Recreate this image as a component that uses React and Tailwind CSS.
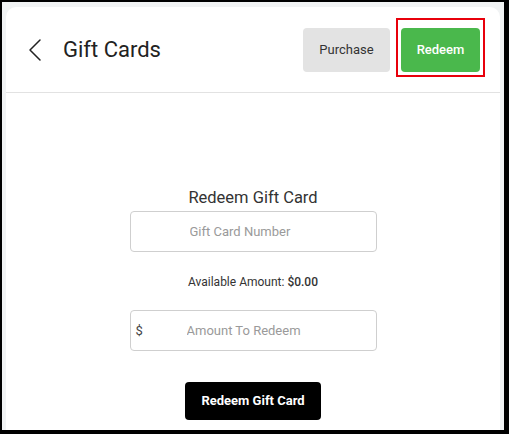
const BackArrow = () => (
  <svg width="14" height="24" viewBox="0 0 14 24" fill="none" stroke="#222" strokeWidth="1.5" strokeLinecap="round" strokeLinejoin="round">
    <polyline points="12,2 2,12 12,22" />
  </svg>
);

const GiftCards = () => {
  return (
    <div className="h-[434px] w-[509px] overflow-hidden bg-black pt-[2px] pl-[2px] pr-[5px] pb-[4px]">
      <div className="h-full overflow-hidden bg-[#f1f3f4] pt-[5px] pl-[4px]" style={{ fontFamily: "Roboto, 'Liberation Sans', sans-serif" }}>
        <div className="h-full w-[494px] rounded-t-[10px] bg-white">
          {/* header */}
          <div className="flex h-[86px] items-center border-b border-[#e2e2e2] pl-[22px] pr-[20px]">
            <button className="flex h-[24px] w-[14px] items-center justify-center">
              <BackArrow />
            </button>
            <h1 className="ml-[21px] text-[22px] text-[#222]">Gift Cards</h1>
            <div className="ml-auto flex items-center gap-[11px]">
              <button className="h-[44px] w-[87px] rounded-[4px] bg-[#e3e3e3] text-[13px] text-[#333]">
                Purchase
              </button>
              <div className="relative">
                <button className="h-[44px] w-[79px] rounded-[4px] bg-[#4ab84c] text-[13px] font-medium text-white">
                  Redeem
                </button>
                <div className="pointer-events-none absolute left-[-5px] top-[-10px] h-[59px] w-[89px] border-2 border-[#e8000b]" />
              </div>
            </div>
          </div>

          {/* redeem form */}
          <div className="flex flex-col items-center pt-[94px]">
            <h2 className="text-[16.5px] leading-[22px] text-[#333]">Redeem Gift Card</h2>
            <input
              className="mt-[2px] h-[41px] w-[247px] rounded-[4px] border border-[#cfcfcf] pl-[59px] text-[13px] text-[#333] outline-none placeholder:text-[#9a9a9a]"
              placeholder="Gift Card Number"
            />
            <p className="mt-[22px] text-[12px] leading-[16px] text-[#333]">
              Available Amount: <span className="font-medium">$0.00</span>
            </p>
            <div className="relative mt-[20px]">
              <span className="absolute left-[6px] top-[11px] text-[13px] text-[#444]">$</span>
              <input
                className="h-[41px] w-[247px] rounded-[4px] border border-[#cfcfcf] pl-[56px] text-[13px] text-[#333] outline-none placeholder:text-[#9a9a9a]"
                placeholder="Amount To Redeem"
              />
            </div>
            <button className="mt-[31px] h-[38px] w-[136px] rounded-[4px] bg-black text-[13px] font-bold text-white">
              Redeem Gift Card
            </button>
          </div>
        </div>
      </div>
    </div>
  );
};

export default GiftCards;
